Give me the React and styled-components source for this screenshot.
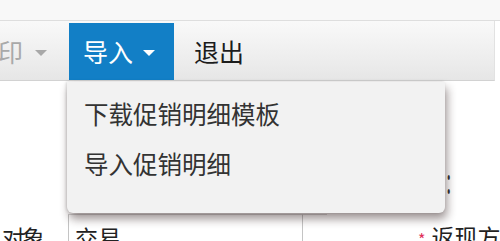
import React from 'react';
import styled, { createGlobalStyle } from 'styled-components';

const GlobalStyle = createGlobalStyle`
  html, body {
    margin: 0;
    padding: 0;
    background: #ffffff;
  }
  body {
    font-family: "Noto Sans CJK SC", "Noto Sans", sans-serif;
  }
`;

const Page = styled.div`
  position: relative;
  width: 500px;
  height: 241px;
  overflow: hidden;
  background: #ffffff;
`;

const TopStrip = styled.div`
  height: 20px;
  background: #f8f8f8;
  border-bottom: 1px solid #dedede;
`;

const Toolbar = styled.div`
  display: flex;
  align-items: stretch;
  width: 495px;
  height: 60px;
  background: linear-gradient(#f9f9f9, #ececec 70%, #e6e6e6);
  border-bottom: 1px solid #d2d2d2;
  border-right: 1px solid #e2e2e2;
  box-sizing: border-box;
  padding-top: 2px;
`;

const ToolButton = styled.div`
  display: flex;
  align-items: center;
  gap: ${p => (p.$muted ? 12 : 10)}px;
  padding: 0 ${p => p.$right || 0}px 0 ${p => p.$left || 15}px;
  margin-left: ${p => p.$offset || 0}px;
  font-size: 25px;
  color: ${p => (p.$active ? '#ffffff' : p.$muted ? '#a9a9a9' : '#1c1c1c')};
  background: ${p => (p.$active ? '#127fc6' : 'transparent')};
  white-space: nowrap;
  line-height: 1;
`;

const Caret = styled.span`
  display: inline-block;
  width: 0;
  height: 0;
  margin-top: 2px;
  border-left: 6px solid transparent;
  border-right: 6px solid transparent;
  border-top: 6px solid ${p => (p.$light ? '#ffffff' : '#a8a8a8')};
`;

const Dropdown = styled.div`
  position: absolute;
  top: 82px;
  left: 67px;
  width: 378px;
  height: 131px;
  box-sizing: border-box;
  padding-top: 6px;
  background: #f2f2f2;
  border-radius: 0 0 6px 6px;
  box-shadow: 2px 6px 10px rgba(40, 20, 20, 0.45), -1px 0 3px rgba(0, 0, 0, 0.15);
  z-index: 5;
`;

const MenuItem = styled.div`
  height: 50px;
  display: flex;
  align-items: center;
  padding-left: 17px;
  font-size: 24.5px;
  color: #333333;
`;

const Form = styled.div`
  display: flex;
  flex-direction: column;
`;

const HiddenRow = styled.div`
  display: flex;
  justify-content: flex-end;
  align-items: flex-end;
  height: 133px;
  padding-right: 49px;
`;

const Colon = styled.span`
  font-size: 16px;
  color: #333;
  line-height: 1;
  margin-bottom: 27px;
  transform: scaleY(2.2);
`;

const FieldRow = styled.div`
  display: flex;
  align-items: stretch;
  height: 40px;
`;

const Label = styled.div`
  flex-shrink: 0;
  width: 68px;
  padding: 12px 0 0 2px;
  box-sizing: border-box;
  font-size: 23px;
  letter-spacing: -3px;
  color: #222;
  line-height: 1;
`;

const Cell = styled.div`
  flex-shrink: 0;
  width: ${p => p.$w}px;
  box-sizing: border-box;
  border-left: 1px solid #c4c4c4;
  border-top: 1px solid #d8d8d8;
  padding: 11px 0 0 6px;
  font-size: 23px;
  color: #222;
  line-height: 1;
`;

const Required = styled.div`
  flex-shrink: 0;
  display: flex;
  gap: 6px;
  padding: 11px 0 0 91px;
  font-size: 23px;
  color: #222;
  line-height: 1;
  white-space: nowrap;
  & > span {
    color: #e0305a;
    font-size: 16px;
    padding-top: 6px;
  }
`;

export default function App() {
  return (
    <Page>
      <GlobalStyle />
      <TopStrip />
      <Toolbar>
        <ToolButton $muted $offset={-42} $right={22}>
          打印 <Caret />
        </ToolButton>
        <ToolButton $active $left={14} $right={19}>
          导入 <Caret $light />
        </ToolButton>
        <ToolButton $left={20}>退出</ToolButton>
      </Toolbar>
      <Dropdown>
        <MenuItem>下载促销明细模板</MenuItem>
        <MenuItem>导入促销明细</MenuItem>
      </Dropdown>
      <Form>
        <HiddenRow>
          <Colon>:</Colon>
        </HiddenRow>
        <FieldRow>
          <Label>对象</Label>
          <Cell $w={234}>交易</Cell>
          <Cell $w={25} />
          <Required>
            <span>*</span>返现方式
          </Required>
        </FieldRow>
      </Form>
    </Page>
  );
}
